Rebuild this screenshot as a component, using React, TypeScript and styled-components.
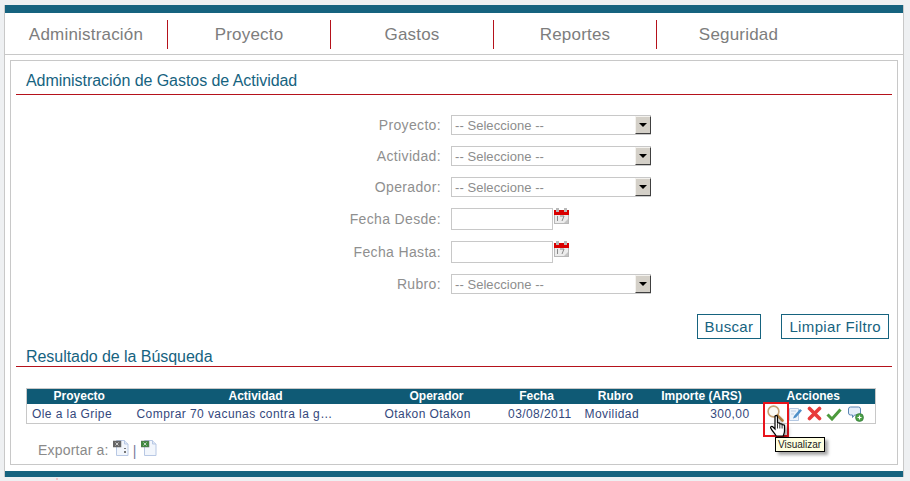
import styled, { createGlobalStyle } from "styled-components";

const GlobalStyle = createGlobalStyle`
  html, body {
    margin: 0;
    padding: 0;
    height: 481px;
    overflow: hidden;
    background: #eef0f2;
    font-family: "Liberation Sans", Arial, sans-serif;
  }
`;

const Page = styled.div`
  width: 910px;
  height: 481px;
  padding: 5px 0 0 4px;
  box-sizing: border-box;
`;

const Shell = styled.div`
  width: 900px;
  background: white;
  border-left: 1px solid #c8c8c8;
  border-right: 1px solid #c8c8c8;
  box-sizing: border-box;
`;

const TopBar = styled.div`
  height: 8px;
  background: #16637f;
`;

const BottomBar = styled.div`
  height: 6px;
  margin-top: 6px;
  background: #16637f;
`;

const FooterTick = styled.div`
  width: 2px;
  height: 2px;
  margin: 1px 0 0 52px;
  background: #f3c6cc;
`;

const Nav = styled.nav`
  display: flex;
  align-items: center;
  height: 41px;
  border-bottom: 1px solid #c8c8c8;
  box-sizing: content-box;
`;

const NavItem = styled.div<{ $last?: boolean }>`
  width: 163px;
  height: 29px;
  margin-top: 1px;
  line-height: 29px;
  text-align: center;
  font-size: 17px;
  letter-spacing: 0.2px;
  color: #7d7d7d;
  box-sizing: border-box;
  border-right: ${(p) => (p.$last ? "none" : "1px solid #b5121b")};
`;

const Panel = styled.section`
  margin: 5px 5px 0 5px;
  height: 405px;
  border: 1px solid #c8c8c8;
  box-sizing: border-box;
  padding: 0 5px;
  position: relative;
`;

const Title = styled.h2`
  margin: 0;
  padding-left: 10px;
  height: 33px;
  line-height: 39px;
  font-size: 16px;
  font-weight: normal;
  letter-spacing: -0.05px;
  color: #16637f;
  border-bottom: 1px solid #b5121b;
`;

const SubTitle = styled(Title)`
  margin-top: 2px;
  height: 25px;
  line-height: 32px;
`;

const Form = styled.div`
  display: flex;
  flex-direction: column;
  gap: 11px;
  margin-top: 20px;
`;

const Row = styled.div`
  display: flex;
  align-items: center;
`;

const Label = styled.label`
  width: 435px;
  padding-right: 10px;
  box-sizing: border-box;
  text-align: right;
  font-size: 14px;
  letter-spacing: 0.35px;
  color: #8f8f8f;
`;

const Select = styled.div`
  width: 200px;
  height: 20px;
  display: flex;
  align-items: center;
  justify-content: space-between;
  box-sizing: border-box;
  border: 1px solid #c8c8c8;
  padding-left: 3px;
  font-size: 13px;
  letter-spacing: 0.05px;
  color: #8d8d8d;
`;

const SelectArrow = styled.span`
  width: 16px;
  height: 18px;
  margin-right: -1px;
  box-sizing: border-box;
  display: flex;
  align-items: center;
  justify-content: center;
  background: #d4d0c8;
  border-top: 1px solid #f4f2ee;
  border-left: 1px solid #f4f2ee;
  border-right: 1px solid #404040;
  border-bottom: 1px solid #404040;
  &::after {
    content: "";
    border-left: 4px solid transparent;
    border-right: 4px solid transparent;
    border-top: 4px solid #000;
  }
`;

const DateInput = styled.input`
  width: 102px;
  height: 22px;
  margin: 0;
  padding: 0;
  box-sizing: border-box;
  border: 1px solid #c8c8c8;
  background: white;
`;

const CalendarBox = styled.svg`
  align-self: flex-start;
  margin-left: 1px;
  display: block;
`;

const Buttons = styled.div`
  display: flex;
  justify-content: flex-end;
  gap: 20px;
  margin-top: 20px;
  padding-right: 3px;
`;

const Button = styled.button`
  height: 25px;
  padding: 0 7px;
  background: white;
  border: 1px solid #16637f;
  font-family: inherit;
  font-size: 15px;
  letter-spacing: 0.35px;
  color: #16637f;
`;

const Table = styled.table`
  width: 849px;
  margin: 21px 0 0 10px;
  border-collapse: collapse;
  table-layout: fixed;
  border: 1px solid #c8c8c8;
  font-size: 12px;
`;

const Th = styled.th`
  height: 15px;
  padding: 0;
  background: #0f5a75;
  color: white;
  font-weight: bold;
  line-height: 15px;
  text-align: center;
`;

const Td = styled.td<{ $align?: string; $padRight?: number }>`
  height: 19px;
  padding: 0 ${(p) => p.$padRight ?? 5}px 0 5px;
  letter-spacing: 0.43px;
  color: #34487c;
  white-space: nowrap;
  overflow: hidden;
  text-align: ${(p) => p.$align || "left"};
`;

const Actions = styled.div`
  display: flex;
  align-items: center;
  gap: 4px;
  margin-left: 10px;
`;

const Export = styled.div`
  display: flex;
  align-items: flex-start;
  margin: 14px 0 0 22px;
  font-size: 14px;
  letter-spacing: 0.2px;
  color: #8a8a8a;
`;

const ExportText = styled.span`
  margin-top: 4px;
  margin-right: 4px;
`;

const ExportSep = styled.span`
  margin: 5px 4px 0 4px;
  color: #7a7a9a;
`;

const ExportFile = styled.svg`
  display: block;
  margin-top: 2px;
`;

const Highlight = styled.div`
  position: absolute;
  left: 752px;
  top: 341px;
  width: 26px;
  height: 35px;
  box-sizing: border-box;
  border: 2px solid #e8141c;
`;

const Cursor = styled.svg`
  position: absolute;
  left: 759px;
  top: 354px;
  filter: drop-shadow(3px 3px 2px rgba(0, 0, 0, 0.35));
`;

const Tooltip = styled.div`
  position: absolute;
  left: 764px;
  top: 376px;
  width: 50px;
  height: 15px;
  padding-left: 2px;
  line-height: 14px;
  box-sizing: border-box;
  background: #ffffe1;
  border: 1px solid #000;
  box-shadow: 3px 3px 3px rgba(0, 0, 0, 0.35);
  font-size: 10px;
  color: #222;
`;

const Calendar = () => (
  <CalendarBox width="15" height="16" viewBox="0 0 15 16">
    <rect x="0.5" y="3" width="14" height="12.5" fill="#ececec" stroke="#b8b8b8" />
    <rect x="0" y="2" width="15" height="5" fill="#d90000" />
    <rect x="2" y="0" width="3" height="4" fill="#b9b9b9" />
    <rect x="10" y="0" width="3" height="4" fill="#b9b9b9" />
    <rect x="3" y="8" width="1" height="5" fill="#8a8a8a" />
    <path d="M6 8h4l-2 5" fill="none" stroke="#8a8a8a" />
    <path d="M10 15l4-4v4z" fill="#c4c4c4" />
  </CalendarBox>
);

const SearchIcon = () => (
  <svg width="17" height="17" viewBox="0 0 17 17">
    <circle cx="6.5" cy="6.5" r="5.400" fill="#f6f3ea" fillOpacity="0.5" stroke="#c6a276" strokeWidth="1.600" />
    <path d="M10.500 10.500l5 5" stroke="#c08a45" strokeWidth="2.600" strokeLinecap="round" />
  </svg>
);

const EditIcon = () => (
  <svg width="15" height="16" viewBox="0 0 15 16">
    <path d="M1.5 2.5h9v12h-9z" fill="#eef4fb" stroke="#b4c8e2" />
    <path d="M6 10l6-7 2 1.500-6 7-3 1z" fill="#4f90c8" />
    <path d="M3 5h5M3 8h3" stroke="#c0d0e4" />
  </svg>
);

const DeleteIcon = () => (
  <svg width="15" height="15" viewBox="0 0 15 15">
    <path d="M2.500 2.500l10 10M12.500 2.500l-10 10" stroke="#e83c3c" strokeWidth="3.600" strokeLinecap="round" />
  </svg>
);

const CheckIcon = () => (
  <svg width="16" height="14" viewBox="0 0 16 14">
    <path d="M1.500 7.500l4.500 4.500 8.500-9.500" fill="none" stroke="#4c9a3c" strokeWidth="3" />
  </svg>
);

const CommentAddIcon = () => (
  <svg width="16" height="16" viewBox="0 0 16 16" style={{ marginLeft: 2 }}>
    <path d="M2.500 1h8a2 2 0 0 1 2 2v4a2 2 0 0 1-2 2h-4l-2 2.500v-2.500h-2a2 2 0 0 1-2-2v-4a2 2 0 0 1 2-2z" fill="#e4eefa" stroke="#5c86b4" />
    <circle cx="11.500" cy="11.500" r="4" fill="#4aa046" stroke="#2f6f35" strokeWidth="0.600" />
    <path d="M9.500 11.500h4M11.500 9.500v4" stroke="white" strokeWidth="1.200" />
  </svg>
);

const ExportIcon = ({ tint, third }: { tint: string; third?: boolean }) => (
  <ExportFile width="16" height="16" viewBox="0 0 16 16">
    <path d="M3.500 .5h8l3.500 3.500v11.500h-11.500z" fill="#f2f6fc" stroke="#b8c8e4" />
    <path d="M11.500 .5v3.500h3.500" fill="#dfe8f5" stroke="#b8c8e4" />
    <rect x="0" y="1" width="8" height="6" fill={tint} stroke="#666" strokeWidth="0.500" />
    <path d="M2.500 2.500l3 3M5.500 2.500l-3 3" stroke="#e8e8e8" strokeWidth="0.800" />
    {third && <path d="M11 8h2v1h-2zM11 11h2v2h-2z" fill="#777" />}
  </ExportFile>
);

const Hand = () => (
  <Cursor width="18" height="23" viewBox="0 0 17 23">
    <path
      d="M4.500 1.500c0-1.300 2.500-1.300 2.500 0v7c0-1 2.300-1 2.300 0v1c0-1 2.300-1 2.300 0v1c0-1 2.400-1 2.400 0v5.500c0 2-.8 3-1.300 5h-7c-1-2-4.500-5.500-5.500-8-.5-1.500 1.300-2 2.300-1l2 2z"
      fill="white"
      stroke="black"
      strokeWidth="1.200"
    />
    <path d="M7 8.500v5M9.300 9.500v4M11.600 10.500v3" stroke="black" strokeWidth="0.800" />
  </Cursor>
);

const selects = ["Proyecto:", "Actividad:", "Operador:"];

const App = () => {
  return (
    <Page>
      <GlobalStyle />
      <Shell>
        <TopBar />
        <Nav>
          <NavItem>Administración</NavItem>
          <NavItem>Proyecto</NavItem>
          <NavItem>Gastos</NavItem>
          <NavItem>Reportes</NavItem>
          <NavItem $last>Seguridad</NavItem>
        </Nav>
        <Panel>
          <Title>Administración de Gastos de Actividad</Title>
          <Form>
            {selects.map((label) => (
              <Row key={label}>
                <Label>{label}</Label>
                <Select>
                  -- Seleccione --
                  <SelectArrow />
                </Select>
              </Row>
            ))}
            <Row>
              <Label>Fecha Desde:</Label>
              <DateInput />
              <Calendar />
            </Row>
            <Row>
              <Label>Fecha Hasta:</Label>
              <DateInput />
              <Calendar />
            </Row>
            <Row>
              <Label>Rubro:</Label>
              <Select>
                -- Seleccione --
                <SelectArrow />
              </Select>
            </Row>
          </Form>
          <Buttons>
            <Button>Buscar</Button>
            <Button>Limpiar Filtro</Button>
          </Buttons>
          <SubTitle>Resultado de la Búsqueda</SubTitle>
          <Table>
            <colgroup>
              <col width="105" />
              <col width="248" />
              <col width="114" />
              <col width="86" />
              <col width="72" />
              <col width="100" />
              <col width="124" />
            </colgroup>
            <thead>
              <tr>
                <Th>Proyecto</Th>
                <Th>Actividad</Th>
                <Th>Operador</Th>
                <Th>Fecha</Th>
                <Th>Rubro</Th>
                <Th>Importe (ARS)</Th>
                <Th>Acciones</Th>
              </tr>
            </thead>
            <tbody>
              <tr>
                <Td>Ole a la Gripe</Td>
                <Td>Comprar 70 vacunas contra la g…</Td>
                <Td>Otakon Otakon</Td>
                <Td $align="right" $padRight={8}>03/08/2011</Td>
                <Td>Movilidad</Td>
                <Td $align="right" $padRight={2}>300,00</Td>
                <Td>
                  <Actions>
                    <SearchIcon />
                    <EditIcon />
                    <DeleteIcon />
                    <CheckIcon />
                    <CommentAddIcon />
                  </Actions>
                </Td>
              </tr>
            </tbody>
          </Table>
          <Export>
            <ExportText>Exportar a:</ExportText>
            <ExportIcon tint="#666" third />
            <ExportSep>|</ExportSep>
            <ExportIcon tint="#3f8a3f" />
          </Export>
          <Highlight />
          <Hand />
          <Tooltip>Visualizar</Tooltip>
        </Panel>
        <BottomBar />
      </Shell>
      <FooterTick />
    </Page>
  );
};

export default App;
